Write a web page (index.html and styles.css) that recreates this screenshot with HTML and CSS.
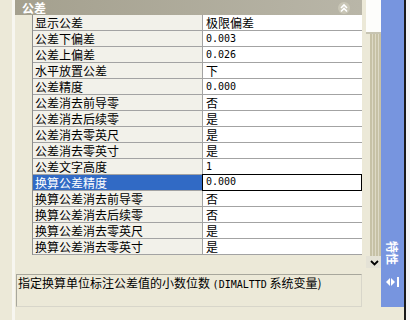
FILE: index.html
```html
<!DOCTYPE html>
<html lang="zh-CN">
<head>
    <title>特性 - 公差</title>
    <link rel="stylesheet" href="styles.css">
</head>
<body>
    <div class="window">
        <div class="gutter"></div>
        <div class="panel">
            <div class="header">
                <span class="header-title">公差</span>
                <span class="collapse">
                    <svg width="12" height="12" viewBox="0 0 12 12">
                        <circle cx="6" cy="6" r="6" fill="#c9c6b6"/>
                        <path d="M3 6 L6 3 L9 6 M3 9.5 L6 6.5 L9 9.5" stroke="#fff" stroke-width="1.6" fill="none"/>
                    </svg>
                </span>
            </div>
            <div class="grid">
                <div class="row"><div class="name">显示公差</div><div class="value">极限偏差</div></div>
                <div class="row"><div class="name">公差下偏差</div><div class="value num">0.003</div></div>
                <div class="row"><div class="name">公差上偏差</div><div class="value num">0.026</div></div>
                <div class="row"><div class="name">水平放置公差</div><div class="value">下</div></div>
                <div class="row"><div class="name">公差精度</div><div class="value num">0.000</div></div>
                <div class="row"><div class="name">公差消去前导零</div><div class="value">否</div></div>
                <div class="row"><div class="name">公差消去后续零</div><div class="value">是</div></div>
                <div class="row"><div class="name">公差消去零英尺</div><div class="value">是</div></div>
                <div class="row"><div class="name">公差消去零英寸</div><div class="value">是</div></div>
                <div class="row"><div class="name">公差文字高度</div><div class="value num">1</div></div>
                <div class="row selected"><div class="name">换算公差精度</div><div class="value num">0.000</div></div>
                <div class="row"><div class="name">换算公差消去前导零</div><div class="value">否</div></div>
                <div class="row"><div class="name">换算公差消去后续零</div><div class="value">否</div></div>
                <div class="row"><div class="name">换算公差消去零英尺</div><div class="value">是</div></div>
                <div class="row"><div class="name">换算公差消去零英寸</div><div class="value">是</div></div>
            </div>
            <div class="desc">指定换算单位标注公差值的小数位数 <span class="mono">(DIMALTTD</span> 系统变量)</div>
        </div>
        <div class="scrollbar">
            <div class="thumb"></div>
            <div class="track"></div>
            <div class="arrow">
                <svg width="9" height="6" viewBox="0 0 9 6">
                    <path d="M1 1 L4.5 4.5 L8 1" stroke="#000" stroke-width="1.8" fill="none"/>
                </svg>
            </div>
        </div>
        <div class="tab">
            <span class="tab-title">特性</span>
            <svg class="tab-icon" width="14" height="10" viewBox="0 0 14 10">
                <path d="M0 5 L4 1 L4 9 Z M9 5 L5 1 L5 9 Z" fill="#fff"/>
                <rect x="11" y="0" width="2" height="10" fill="#fff"/>
            </svg>
        </div>
        <div class="edge"></div>
    </div>
</body>
</html>
```

FILE: styles.css
```css
* {
    margin: 0;
    padding: 0;
    box-sizing: border-box;
}

body {
    width: 410px;
    height: 320px;
    overflow: hidden;
    background: #ece9d8;
    font-family: "Noto Sans CJK SC", sans-serif;
    font-size: 12px;
    color: #000;
}

.window {
    display: flex;
    height: 320px;
}

.gutter {
    width: 15px;
    border-right: 3px solid #f7f6f0;
}

.panel {
    width: 350px;
    display: flex;
    flex-direction: column;
}

.header {
    height: 15px;
    background: linear-gradient(90deg, #a4a08e, #b9b6a8);
    display: flex;
    align-items: center;
    justify-content: space-between;
    padding: 0 12px 0 7px;
    width: 347px;
}

.header-title {
    color: #fff;
    font-weight: bold;
    line-height: 15px;
}

.collapse {
    display: flex;
}

.grid {
    margin-left: 17px;
    width: 330px;
    border-left: 1px solid #8f8f8f;
}

.row {
    display: flex;
    height: 16px;
    border-bottom: 1px solid #a3a3a3;
}

.name {
    width: 170px;
    background: #f2f1ea;
    border-right: 1px solid #a3a3a3;
    padding-left: 2px;
    line-height: 15px;
    white-space: nowrap;
    overflow: hidden;
}

.value {
    flex: 1;
    background: #fff;
    padding-left: 3px;
    line-height: 15px;
}

.num, .mono {
    font-family: "DejaVu Sans Mono", monospace;
    font-size: 10px;
}

.selected .name {
    background: #316ac5;
    color: #fff;
}

.selected .value {
    border: 1px solid #000;
    margin: -1px 0 -1px -1px;
    line-height: 14px;
    padding-left: 3px;
}

.desc {
    margin: 19px 0 0 1px;
    width: 346px;
    height: 33px;
    border: 1px solid #a8a79c;
    border-right-color: #d8d6ca;
    border-bottom-color: #d8d6ca;
    padding: 1px 0 0 1px;
    line-height: 14px;
    white-space: nowrap;
}

.scrollbar {
    width: 19px;
    display: flex;
    flex-direction: column;
    padding-left: 4px;
}

.thumb {
    height: 34px;
    background: #fdfdfb;
    border-bottom: 2px solid #c7c4b2;
}

.track {
    height: 222px;
    margin-left: 4px;
    background: repeating-linear-gradient(90deg, #c6c1a6 0 2px, #ddd9c6 2px 3px);
}

.arrow {
    display: flex;
    justify-content: center;
    padding: 4px 0 0 2px;
    height: 12px;
    background: #e4e2d6;
}

.tab {
    width: 23px;
    height: 307px;
    background: #7795df;
    display: flex;
    flex-direction: column;
    align-items: center;
    justify-content: flex-end;
    padding-bottom: 20px;
}

.tab-title {
    writing-mode: vertical-rl;
    text-orientation: sideways;
    color: #fff;
    font-weight: bold;
    font-size: 12px;
    margin-bottom: 12px;
}

.tab-icon {
    display: block;
}

.edge {
    width: 6px;
    border-left: 2px solid #1a1a1a;
    background: #f5f5f5;
}
```
